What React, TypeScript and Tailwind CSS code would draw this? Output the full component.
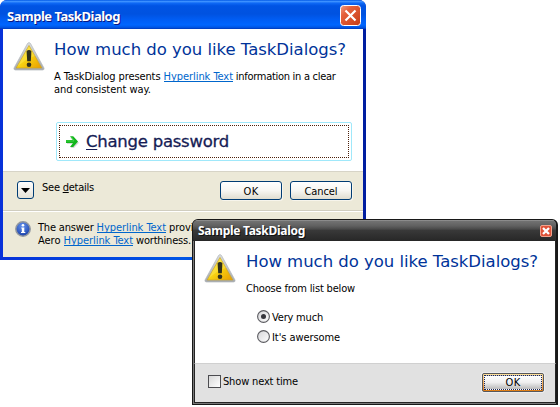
import { useLayoutEffect, useRef, useState } from "react";
import type { ReactNode } from "react";

const ui = "font-['DejaVu_Sans_Condensed','DejaVu_Sans',sans-serif]";

/* A run of text whose letter spacing is tuned so that it spans `width` pixels. */
function Fit({ width, className = "", children }: { width: number; className?: string; children: ReactNode }) {
  const ref = useRef<HTMLSpanElement>(null);
  const [spacing, setSpacing] = useState(0);
  useLayoutEffect(() => {
    const el = ref.current;
    if (!el) return;
    const count = (el.textContent || "").length;
    setSpacing((width - el.getBoundingClientRect().width) / count);
  }, [width]);
  return (
    <span ref={ref} className={`inline-block whitespace-pre ${className}`} style={{ letterSpacing: spacing }}>
      {children}
    </span>
  );
}

function Link() {
  return (
    <Fit width={69.5} className="h-[12px] border-b border-[#0066cc] text-[#0066cc]">
      Hyperlink Text
    </Fit>
  );
}

function Warning() {
  return (
    <svg width="32" height="29" viewBox="0 0 32 29" className="block shrink-0">
      <defs>
        <linearGradient id="amber" x1="0" y1="0" x2="1" y2="1">
          <stop offset="0" stopColor="#ffe94a" />
          <stop offset=".5" stopColor="#f8d312" />
          <stop offset="1" stopColor="#e89c00" />
        </linearGradient>
        <linearGradient id="rim" x1="0" y1="0" x2="0" y2="1">
          <stop offset="0" stopColor="#d9dcdf" />
          <stop offset="1" stopColor="#a5a9ad" />
        </linearGradient>
      </defs>
      <path d="M14.5 1.5Q16 -.5 17.5 1.5L31 26Q31.5 28 29.5 28H2.5Q.5 28 1 26Z" fill="url(#rim)" stroke="#b3b7ba" strokeWidth=".7" />
      <path d="M16 3.5L28.8 26H3.2Z" fill="url(#amber)" stroke="#c9a42b" strokeWidth=".7" />
      <path d="M16 4L22 14Q14 16 4 25Z" fill="#fff27a" opacity=".3" />
      <path d="M13.6 9Q16 7.2 18.4 9L17.8 19.2H14.2Z" fill="#30301c" />
      <circle cx="16" cy="22.7" r="2.3" fill="#30301c" />
    </svg>
  );
}

function Heading() {
  return (
    <h1 className="h-5 text-[16.5px] leading-5 text-[#003399] font-['DejaVu_Sans',sans-serif]">
      <Fit width={292}>How much do you like TaskDialogs?</Fit>
    </h1>
  );
}

function Radio({ checked = false }: { checked?: boolean }) {
  return (
    <svg width="13" height="13" viewBox="0 0 13 13" className="block shrink-0">
      <defs>
        <linearGradient id="radio" x1="0" y1="0" x2="1" y2="1">
          <stop offset="0" stopColor="#d5d5d8" />
          <stop offset="1" stopColor="#fff" />
        </linearGradient>
      </defs>
      <circle cx="6.5" cy="6.5" r="5.9" fill="url(#radio)" stroke="#5b5b60" strokeWidth="1.1" />
      {checked && <circle cx="6.5" cy="6.5" r="2.5" fill="#36363c" />}
    </svg>
  );
}

function XpButton({ label, width }: { label: string; width: number }) {
  return (
    <button className="flex h-[19px] w-[62px] justify-center rounded-[3px] border border-[#003c74] bg-linear-to-b from-white via-[#f7f6f2] to-[#e0ddd0] pt-[3px] text-[11px] leading-[13px] shadow-[1px_1px_0_#f7f5ec]">
      <Fit width={width}>{label}</Fit>
    </button>
  );
}

function BlueDialog() {
  return (
    <section className="absolute left-0 top-0 flex h-[260px] w-[366px] flex-col overflow-hidden rounded-t-[7px] bg-linear-to-r from-[#0831d9] via-[#0055e5] to-[#001da0] px-[3px] pb-[3px]">
      <header className="-mx-[3px] flex h-[29px] shrink-0 items-start justify-between bg-[linear-gradient(180deg,#0058e6_0%,#3d91ff_5%,#0e68f5_11%,#0054e4_20%,#0052e0_48%,#005df4_68%,#0066ff_86%,#0057e7_94%,#0038b8_100%)] pl-[7px] pr-[5px] pt-[5px]">
        <div className="pt-[3px] text-[13px] font-bold leading-[16px] text-white [text-shadow:1px_1px_0_#0a1883] font-['Noto_Sans',sans-serif]">
          <Fit width={113}>Sample TaskDialog</Fit>
        </div>
        <svg width="21" height="21" viewBox="0 0 21 21" className="block">
          <defs>
            <linearGradient id="close" x1="0" y1="0" x2="1" y2="1">
              <stop offset="0" stopColor="#f0a088" />
              <stop offset=".3" stopColor="#e5613c" />
              <stop offset="1" stopColor="#c63b14" />
            </linearGradient>
          </defs>
          <rect x=".5" y=".5" width="20" height="20" rx="3" fill="url(#close)" stroke="#fff" />
          <path d="M5.5 5.5l10 10m0-10l-10 10" stroke="#fff" strokeWidth="2.2" />
        </svg>
      </header>
      <main className="flex h-[142px] shrink-0 bg-white pl-[10px] pt-[11px]">
        <div className="w-[41px] pt-[2px]"><Warning /></div>
        <div className="flex flex-col">
          <Heading />
          <div className="mt-[10px] text-[11px] leading-[13px]">
            <div className="flex h-[13px]">
              <Fit width={109.5}>A TaskDialog presents </Fit><Link /><Fit width={102.5}> information in a clear</Fit>
            </div>
            <div className="flex h-[13px]"><Fit width={97}>and consistent way.</Fit></div>
          </div>
          <div className="ml-[2px] mt-[26px] h-[39px] w-[296px] rounded-[2px] border border-[#a0e8fa] p-[2px]">
            <div className="flex h-[33px] items-center border border-dotted border-[#4d210b] pl-[5px]">
              <svg width="16" height="16" viewBox="0 0 16 16" className="block">
                <path d="M2 7h6L5 3.5h4L14 8.7 9 14H5.5L8.5 10H2z" fill="#d8d8d8" />
                <path d="M1 6h7L5 2.2h3.2L13 7.5 8.2 13H5l3-4H1z" fill="#12b51c" />
                <path d="M1 7h8L6.5 3" fill="none" stroke="#4bdc50" strokeWidth=".8" />
              </svg>
              <div className="ml-[5px] h-5 text-[16.5px] leading-5 text-[#151c55] font-['DejaVu_Sans',sans-serif] [-webkit-text-stroke:0.3px_#151c55]">
                <Fit width={143}><u className="decoration-1 underline-offset-2">C</u>hange password</Fit>
              </div>
            </div>
          </div>
        </div>
      </main>
      <div className="flex h-[39px] shrink-0 border-t border-[#d7d4c7] bg-[#ece9d8] pl-[14px] pr-[11px] pt-[9px] text-[11px] leading-[13px]">
        <div className="flex h-[18px] w-[17px] items-center justify-center rounded-[3px] border border-[#003c74] bg-linear-to-b from-white to-[#e5e2d7]">
          <svg width="9" height="5" viewBox="0 0 9 5"><path d="M0 0h9L4.5 5z" /></svg>
        </div>
        <div className="ml-[8px]"><Fit width={52}>See <u className="underline-offset-1">d</u>etails</Fit></div>
        <div className="ml-auto flex gap-2">
          <XpButton label="OK" width={15} />
          <XpButton label="Cancel" width={33} />
        </div>
      </div>
      <footer className="flex h-[47px] shrink-0 border-t border-[#d0cdbf] bg-[#ece9d8] pl-[12px] pt-[10px] text-[11px] leading-[13px] shadow-[inset_0_1px_0_#fff]">
        <svg width="16" height="16" viewBox="0 0 16 16" className="block">
          <defs>
            <radialGradient id="info" cx=".45" cy=".3" r=".75">
              <stop offset="0" stopColor="#6694ee" />
              <stop offset="1" stopColor="#1238a2" />
            </radialGradient>
          </defs>
          <circle cx="8" cy="8" r="7.2" fill="url(#info)" stroke="#9298a0" strokeWidth="1.5" />
          <path d="M6.3 6.5h3V11h1v1H6v-1h.8V7.5h-.5z" fill="#fff" />
          <circle cx="8" cy="4.2" r="1.3" fill="#fff" />
        </svg>
        <div className="ml-[7px]">
          <div className="flex h-[13px]"><Fit width={58.5}>The answer </Fit><Link /><Fit width={27.5}> provi</Fit></div>
          <div className="flex h-[13px]"><Fit width={25.5}>Aero </Fit><Link /><Fit width={58}> worthiness.</Fit></div>
        </div>
      </footer>
    </section>
  );
}

function BlackDialog() {
  return (
    <section className="absolute left-[192px] top-[219px] flex h-[186px] w-[366px] flex-col overflow-hidden rounded-t-[6px] border border-r-2 border-[#181818] bg-[#777] pl-px pb-px">
      <header className="-ml-px flex h-[21px] shrink-0 justify-between bg-[linear-gradient(180deg,#999_0%,#707070_7%,#606060_28%,#484848_44%,#393939_49%,#303030_74%,#272727_100%)] pl-[5px] pr-[4px] pt-[5px]">
        <div className="-mt-[2px] text-[12px] font-bold leading-[16px] text-white [text-shadow:1px_1px_0_#111] font-['Noto_Sans',sans-serif]">
          <Fit width={107}>Sample TaskDialog</Fit>
        </div>
        <svg width="12" height="12" viewBox="0 0 12 12" className="block">
          <rect x=".5" y=".5" width="11" height="11" rx="1.5" fill="#df5238" stroke="#f1a28d" />
          <path d="M3 3l6 6m0-6L3 9" stroke="#fff" strokeWidth="2.3" />
        </svg>
      </header>
      <main className="flex h-[122px] shrink-0 border-l border-r border-l-[#242424] border-r-[#242424] bg-white pl-[9px] pt-[11px]">
        <div className="w-[42px] pt-[2px]"><Warning /></div>
        <div className="text-[11px] leading-[13px]">
          <Heading />
          <div className="mt-[10px] flex h-[13px]"><Fit width={109}>Choose from list below</Fit></div>
          <div className="ml-[11px] mt-[15px] flex h-[20px]"><Radio checked /><div className="ml-[2px] pt-px"><Fit width={51}>Very much</Fit></div></div>
          <div className="ml-[11px] flex h-[20px]"><Radio /><div className="ml-[2px] pt-px"><Fit width={68}>It's awersome</Fit></div></div>
        </div>
      </main>
      <footer className="flex h-[40px] shrink-0 border border-t-[#d0d0d0] border-x-[#242424] border-b-[#242424] bg-[#e1e1e1] pl-[13px] pr-[11px] pt-[9px] text-[11px] leading-[13px]">
        <span className="mt-[2px] size-[13px] border border-[#4c4c50] bg-linear-to-br from-[#d8d8d8] to-white" />
        <div className="ml-[2px] pt-[2px]"><Fit width={75}>Show next time</Fit></div>
        <button className="ml-auto h-[19px] w-[62px] rounded-[2px] border border-[#56585c] bg-linear-to-b from-[#ffe19a] to-[#df7c0d] p-px shadow-[0_0_0_1px_#eee]">
          <span className="flex h-[15px] justify-center border border-dotted border-[#172557] bg-linear-to-b from-white via-[#eee] to-[#bbb]">
            <Fit width={15}>OK</Fit>
          </span>
        </button>
      </footer>
    </section>
  );
}

export default function App() {
  return (
    <div className={`relative h-[407px] w-[560px] overflow-hidden bg-white text-black ${ui}`}>
      <BlueDialog />
      <BlackDialog />
    </div>
  );
}
